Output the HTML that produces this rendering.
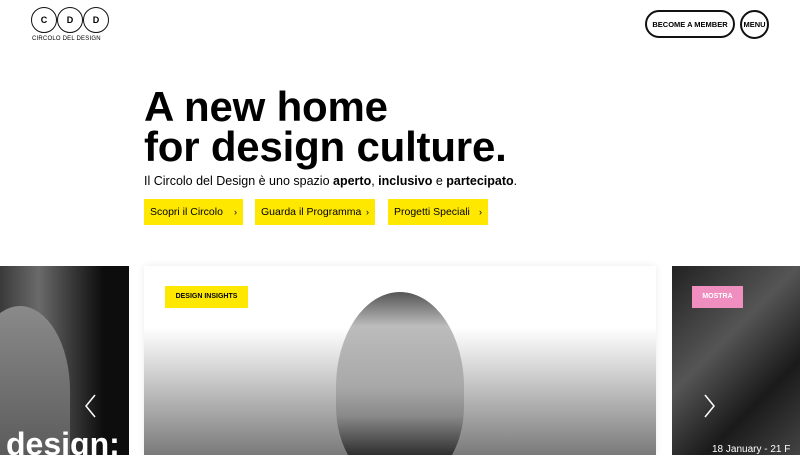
<!DOCTYPE html>
<html><head><meta charset="utf-8"><style>
*{margin:0;padding:0;box-sizing:border-box}
html,body{width:800px;height:455px;overflow:hidden}
body{background:#fff;font-family:"Liberation Sans",sans-serif;position:relative;color:#000}
.logo{position:absolute;left:31px;top:7px}
.c{position:absolute;top:0;width:26px;height:26px;border:1.5px solid #111;border-radius:50%;font-size:9px;font-weight:bold;display:flex;align-items:center;justify-content:center}
.lt{position:absolute;left:1px;top:29px;font-size:6px;white-space:nowrap;letter-spacing:.2px}
.mem{position:absolute;left:645px;top:10px;width:90px;height:28px;border:2px solid #111;border-radius:14px;font-size:7.5px;font-weight:bold;display:flex;align-items:center;justify-content:center;white-space:nowrap}
.menu{position:absolute;left:740px;top:10px;width:29px;height:29px;border:2px solid #111;border-radius:50%;font-size:7.5px;font-weight:bold;display:flex;align-items:center;justify-content:center}
h1{position:absolute;left:144px;top:87px;font-size:42px;line-height:40px;font-weight:bold;letter-spacing:-0.2px;white-space:nowrap}
.sub{position:absolute;left:144px;top:174px;font-size:12.5px;white-space:nowrap}
.btn{position:absolute;top:199px;height:26px;background:#ffe800;font-size:10.5px;line-height:26px;padding-left:6px;white-space:nowrap}
.btn span{position:absolute;right:6px;font-size:9px}
.card{position:absolute;top:266px;height:189px;overflow:hidden}
.tag{position:absolute;height:22px;font-size:7px;font-weight:bold;line-height:22px;text-align:center}
.arr{position:absolute;top:128px}
</style></head><body>
<div class="logo">
<div class="c" style="left:0">C</div><div class="c" style="left:26px">D</div><div class="c" style="left:52px">D</div>
<div class="lt">CIRCOLO DEL DESIGN</div></div>
<div class="mem">BECOME A MEMBER</div>
<div class="menu">MENU</div>
<h1>A new home<br>for design culture.</h1>
<div class="sub">Il Circolo del Design è uno spazio <b>aperto</b>, <b>inclusivo</b> e <b>partecipato</b>.</div>
<div class="btn" style="left:144px;width:99px">Scopri il Circolo<span>›</span></div>
<div class="btn" style="left:255px;width:120px">Guarda il Programma<span>›</span></div>
<div class="btn" style="left:388px;width:100px">Progetti Speciali<span>›</span></div>

<div class="card" style="left:0;width:129px;background:linear-gradient(90deg,#3a3a3a 0,#6a6a6a 30%,#3a3a3a 55%,#0d0d0d 80%)">
<div style="position:absolute;left:-30px;top:40px;width:100px;height:170px;border-radius:50% 50% 0 0;background:linear-gradient(180deg,#8a8a8a,#555)"></div>
<svg class="arr" style="left:84px" width="12" height="24" viewBox="0 0 12 24"><path d="M11 1 L2 12 L11 23" stroke="#fff" stroke-width="1.5" fill="none"/></svg>
<div style="position:absolute;left:6px;top:160px;color:#fff;font-size:32px;font-weight:bold">design:</div>
</div>

<div class="card" style="left:144px;width:512px;background:linear-gradient(180deg,#fff 0,#fff 62px,#d8d8d8 100px,#7a7a7a 189px);box-shadow:0 0 8px rgba(0,0,0,.08)">
<div class="tag" style="left:21px;top:20px;width:83px;background:#ffe800">DESIGN INSIGHTS</div>
<div style="position:absolute;left:192px;top:26px;width:128px;height:190px;border-radius:50% 50% 40% 40%;background:linear-gradient(180deg,#555 0,#bcbcbc 18%,#a8a8a8 50%,#8a8a8a 65%,#333 85%)"></div>
</div>

<div class="card" style="left:672px;width:128px;background:linear-gradient(135deg,#222,#555 40%,#1a1a1a 70%,#444)">
<div class="tag" style="left:20px;top:20px;width:51px;background:#f08ec0;color:#fff">MOSTRA</div>
<svg class="arr" style="left:32px" width="12" height="24" viewBox="0 0 12 24"><path d="M1 1 L10 12 L1 23" stroke="#fff" stroke-width="1.5" fill="none"/></svg>
<div style="position:absolute;left:40px;top:178px;color:#fff;font-size:10px;white-space:nowrap">18 January - 21 F</div>
</div>
</body></html>
